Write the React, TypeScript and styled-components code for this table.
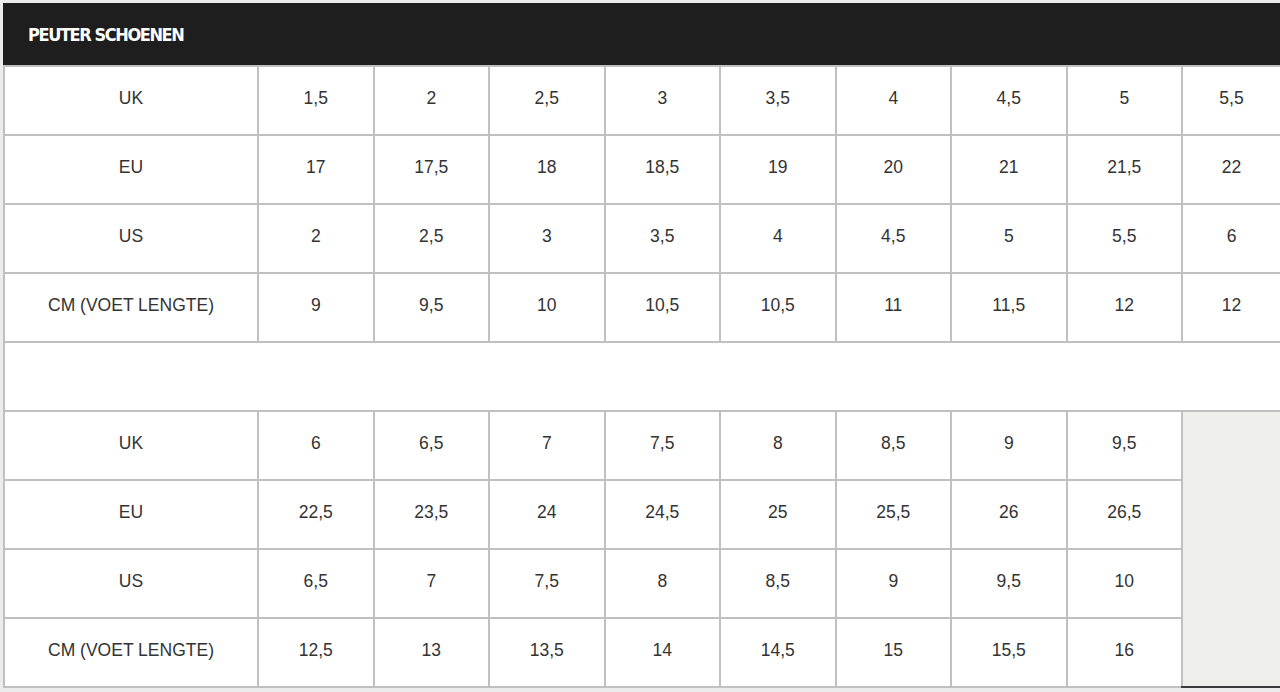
import React from 'react';
import styled, { createGlobalStyle } from 'styled-components';

const GlobalStyle = createGlobalStyle`
    html, body {
        margin: 0;
        padding: 0;
        background: #ececec;
    }
    body {
        padding: 3px 0 0 3px;
        overflow: hidden;
    }
`;

const Wrapper = styled.div`
    width: 1277px;
    overflow: hidden;
`;

const Header = styled.div`
    width: 1277px;
    height: 62px;
    background: #1e1e1e;
    display: flex;
    align-items: center;
    padding-left: 25px;
    box-sizing: border-box;
    color: #fff;
    font-family: 'DejaVu Sans Condensed', 'DejaVu Sans', sans-serif;
    font-weight: 700;
    font-size: 18px;
    letter-spacing: -1.4px;
    text-transform: uppercase;
`;

const Table = styled.table`
    border-collapse: collapse;
    table-layout: fixed;
    width: 1277px;
    background: #fff;
    font-family: 'Liberation Sans', Arial, sans-serif;
    font-size: 17.5px;
    color: #333;
`;

const Cell = styled.td<{ $blank?: boolean }>`
    height: 62px;
    padding: 0 0 5px;
    text-align: center;
    vertical-align: middle;
    border: 2px solid #c0c0c0;
    background: ${({ $blank }) => ($blank ? '#efefeb' : '#fff')};
`;

const Spacer = styled.td`
    height: 67px;
    padding: 0;
    border: 2px solid #c0c0c0;
    background: #fff;
`;

const BlankCell = styled(Cell)`
    border-right: 2px solid #3a3a3a;
    border-bottom: 2px solid #3a3a3a;
`;

type Row = { label: string; values: string[] };

const upper: Row[] = [
    { label: 'UK', values: ['1,5', '2', '2,5', '3', '3,5', '4', '4,5', '5', '5,5'] },
    { label: 'EU', values: ['17', '17,5', '18', '18,5', '19', '20', '21', '21,5', '22'] },
    { label: 'US', values: ['2', '2,5', '3', '3,5', '4', '4,5', '5', '5,5', '6'] },
    { label: 'CM (VOET LENGTE)', values: ['9', '9,5', '10', '10,5', '10,5', '11', '11,5', '12', '12'] },
];

const lower: Row[] = [
    { label: 'UK', values: ['6', '6,5', '7', '7,5', '8', '8,5', '9', '9,5'] },
    { label: 'EU', values: ['22,5', '23,5', '24', '24,5', '25', '25,5', '26', '26,5'] },
    { label: 'US', values: ['6,5', '7', '7,5', '8', '8,5', '9', '9,5', '10'] },
    { label: 'CM (VOET LENGTE)', values: ['12,5', '13', '13,5', '14', '14,5', '15', '15,5', '16'] },
];

const App: React.FC = () => {
    return (
        <>
            <GlobalStyle />
            <Wrapper>
                <Header>Peuter schoenen</Header>
                <Table>
                    <colgroup>
                        <col style={{ width: 254 }} />
                        {Array.from({ length: 8 }).map((_, i) => (
                            <col key={i} style={{ width: 115.5 }} />
                        ))}
                        <col style={{ width: 99 }} />
                    </colgroup>
                    <tbody>
                        {upper.map((row) => (
                            <tr key={'u' + row.label}>
                                <Cell>{row.label}</Cell>
                                {row.values.map((v, i) => (
                                    <Cell key={i}>{v}</Cell>
                                ))}
                            </tr>
                        ))}
                        <tr>
                            <Spacer colSpan={10} />
                        </tr>
                        {lower.map((row, r) => (
                            <tr key={'l' + row.label}>
                                <Cell>{row.label}</Cell>
                                {row.values.map((v, i) => (
                                    <Cell key={i}>{v}</Cell>
                                ))}
                                {r === 0 && <BlankCell $blank rowSpan={4} />}
                            </tr>
                        ))}
                    </tbody>
                </Table>
            </Wrapper>
        </>
    );
};

export default App;
